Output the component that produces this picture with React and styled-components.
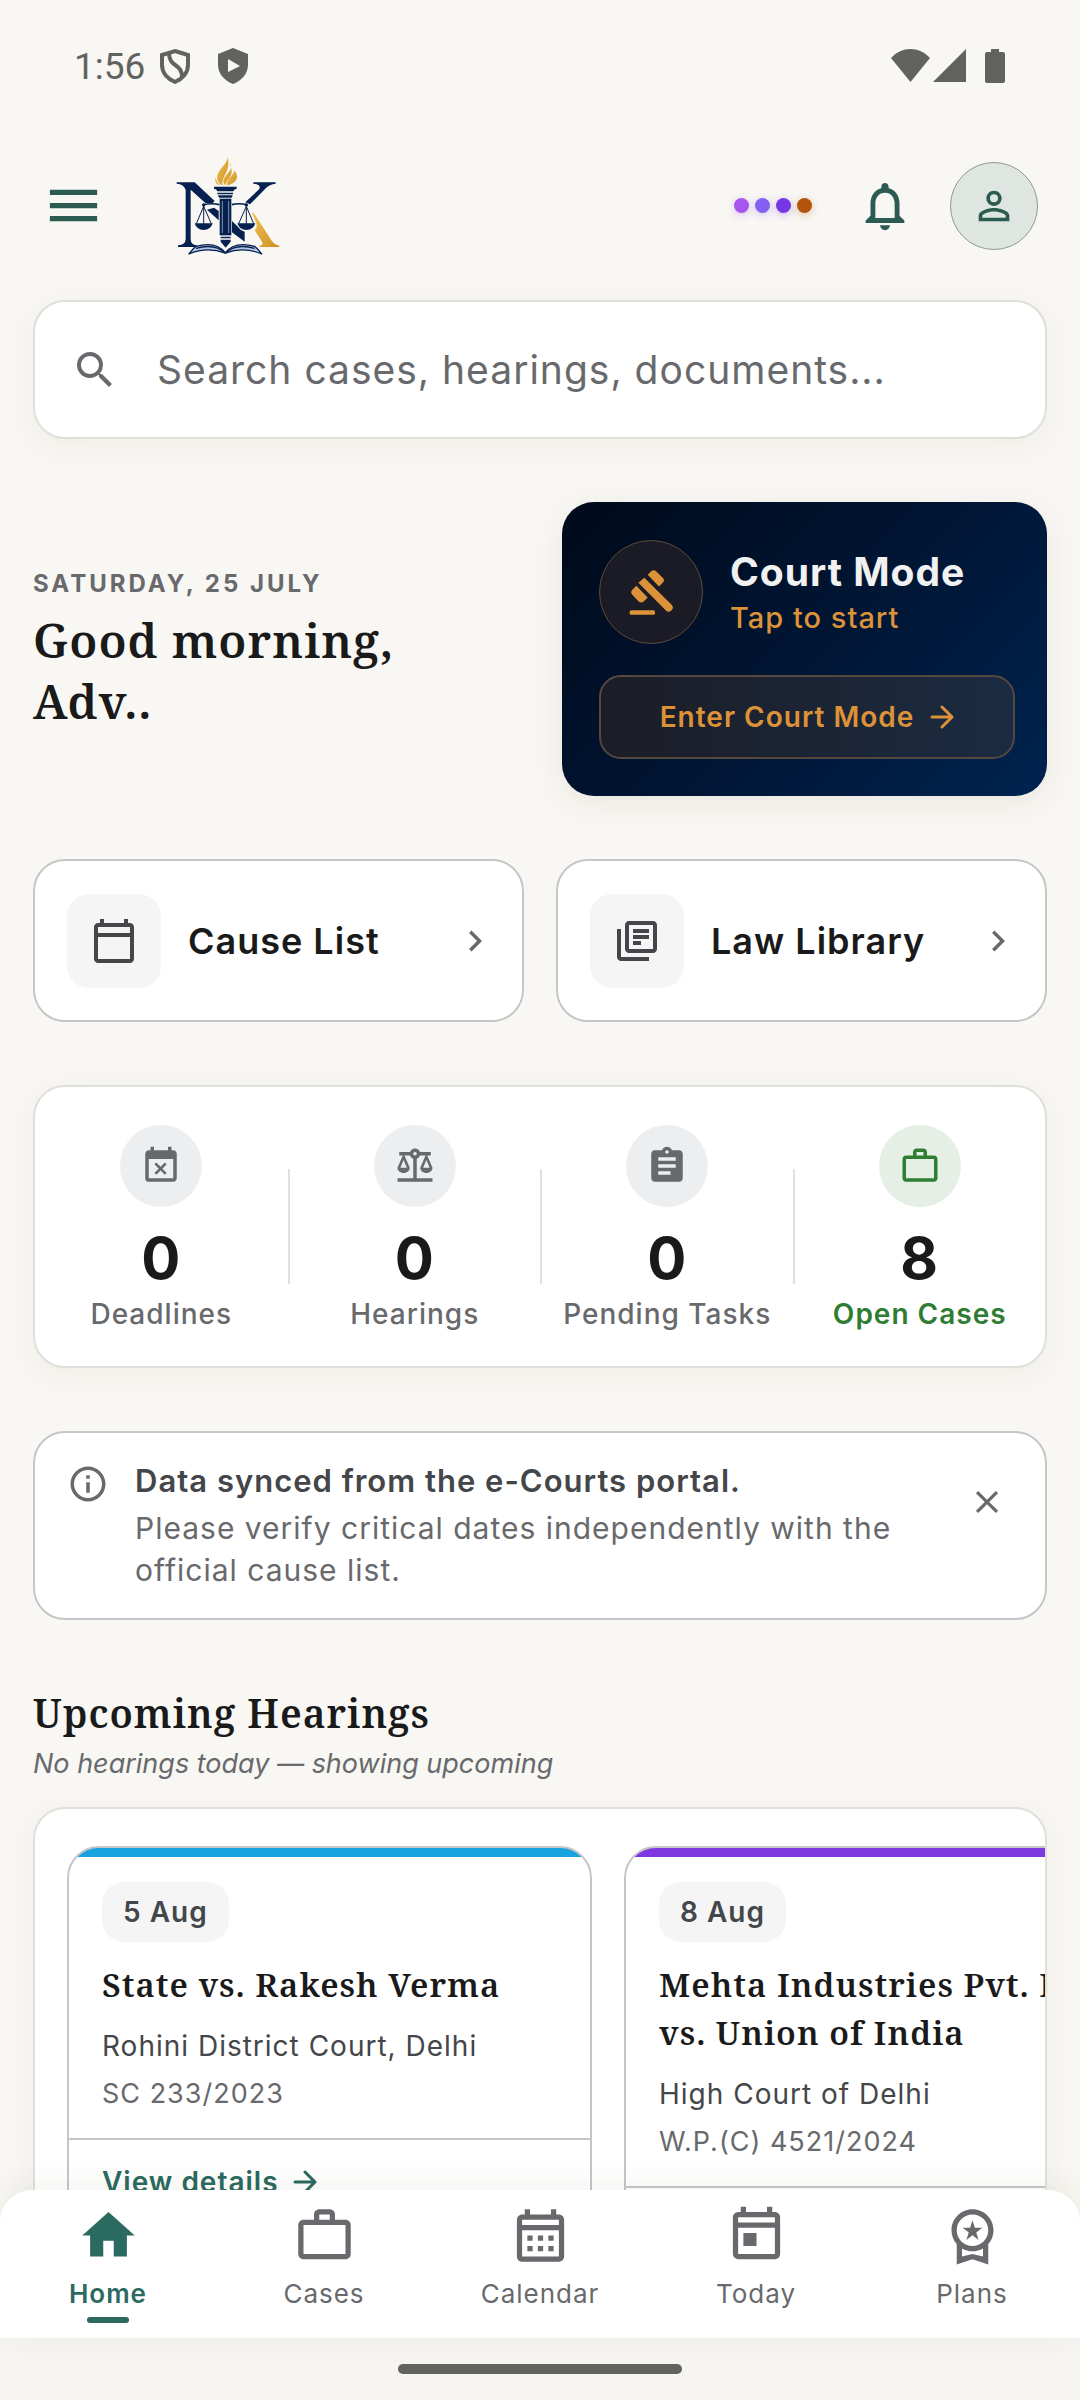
import styled, { createGlobalStyle } from "styled-components";
import {
  MdMenu,
  MdNotificationsNone,
  MdPersonOutline,
  MdSearch,
  MdOutlineCalendarToday,
  MdOutlineLibraryBooks,
  MdChevronRight,
  MdEventBusy,
  MdBalance,
  MdAssignment,
  MdWorkOutline,
  MdInfoOutline,
  MdClose,
  MdHome,
  MdOutlineCalendarMonth,
  MdOutlineToday,
  MdOutlineWorkspacePremium,
} from "react-icons/md";

const teal = "#2b6a60";
const darkTeal = "#2b5b51";
const ink = "#1a1a1a";
const grey = "#68696c";
const darkGrey = "#444649";
const amber = "#dc9238";
const green = "#2e7d32";
const paper = "#f8f7f3";
const line = "#c6c6c8";
const softLine = "#e0dfda";
const system = "#62625f";
const serif = `"Noto Serif", "DejaVu Serif Condensed", "DejaVu Serif", serif`;

const stats = [
  { label: "Deadlines", value: 0, Icon: MdEventBusy },
  { label: "Hearings", value: 0, Icon: MdBalance },
  { label: "Pending Tasks", value: 0, Icon: MdAssignment },
  { label: "Open Cases", value: 8, Icon: MdWorkOutline, active: true },
];

const hearings = [
  {
    date: "5 Aug",
    title: "State vs. Rakesh Verma",
    court: "Rohini District Court, Delhi",
    number: "SC 233/2023",
    color: "#17a2e0",
  },
  {
    date: "8 Aug",
    title: "Mehta Industries Pvt. Ltd. vs. Union of India",
    court: "High Court of Delhi",
    number: "W.P.(C) 4521/2024",
    color: "#7c3ae0",
  },
];

const tabs = [
  { label: "Home", Icon: MdHome, active: true },
  { label: "Cases", Icon: MdWorkOutline },
  { label: "Calendar", Icon: MdOutlineCalendarMonth },
  { label: "Today", Icon: MdOutlineToday },
  { label: "Plans", Icon: MdOutlineWorkspacePremium },
];

const dots = ["#a855f0", "#8560f0", "#7638e6", "#b4530c"];

const Logo = () => (
  <svg width="104" height="98" viewBox="48 50 312 294" role="img" aria-label="NK">
    <defs>
      <linearGradient id="gold" x1="0" y1="0" x2="1" y2="1">
        <stop offset="0" stopColor="#efc654" />
        <stop offset="1" stopColor="#cf8e22" />
      </linearGradient>
    </defs>
    <g fill="#06214f">
      <path d="M50 126H104L164 182 158 188H136L92 148V296Q92 313 110 315V320H54V315Q77 313 77 296V150Q72 131 50 130Z" />
      <path d="M141 208L162 202 176 212V240Z" />
      <path d="M216 242L232 258Q240 270 254 274V304L216 276Z" />
      <path d="M280 126H347V130Q328 132 318 143L270 192 256 186 298 146Q304 133 280 130Z" />
    </g>
    <path d="M274 214L284 222 334 300Q343 314 358 316V320H298V316Q312 314 306 304L284 270Q294 262 288 246Z" fill="url(#gold)" />
    <g fill="url(#gold)">
      <path d="M203 50C200 78 168 88 172 116 174 126 179 132 188 135 180 110 214 96 203 50Z" />
      <path d="M210 66C224 90 196 100 190 120 189 127 191 132 196 135 200 116 220 108 214 84Z" />
      <path d="M223 90C222 106 200 114 201 135 222 132 238 116 228 98Z" />
      <path d="M167 110C163 122 168 132 180 135 172 128 169 121 167 110Z" />
    </g>
    <g stroke="#06214f" fill="none">
      <path d="M128 194Q154 187 178 193M216 193Q238 187 262 194" strokeWidth="5" />
      <path d="M131 190V252M131 198L109 250M131 198L154 250M259 190V252M259 198L236 250M259 198L281 250" strokeWidth="3" />
    </g>
    <g fill="#06214f">
      <circle cx="131" cy="194" r="5" />
      <circle cx="259" cy="194" r="5" />
      <path d="M104 249H158Q152 269 131 269T104 249Z" />
      <path d="M232 249H286Q280 269 259 269T232 249Z" />
      <path d="M162 139H230V145Q222 146 220 153H172Q170 146 162 145Z" />
      <path d="M172 157H219V162H172ZM174 165H218L215 172H177Z" />
      <path d="M179 175H214V285H179Z" />
      <path d="M182 289H212V294H182ZM182 298H212V304L197 322 182 304Z" />
    </g>
    <path d="M187 182V278M206 182V278" stroke="#c3cee2" strokeWidth="2" />
    <path d="M196 338Q170 302 108 318 98 326 87 341 140 318 196 338 252 318 305 341 294 326 284 318 222 302 196 338Z" fill="#b6c6e2" stroke="#06214f" strokeWidth="4" strokeLinejoin="round" />
    <path d="M196 338Q164 308 108 324M196 338Q228 308 284 324" fill="none" stroke="#06214f" strokeWidth="4" />
  </svg>
);

const OutlineShield = () => (
  <svg width="30" height="36" viewBox="0 0 30 36" fill="none" stroke={system} strokeWidth="4">
    <path d="M15 3L28 7V17C28 25 22 31 15 34 8 31 2 25 2 17V7Z" />
    <path d="M9 5C9 20 23 15 22 30" />
  </svg>
);

const PlayShield = () => (
  <svg width="30" height="36" viewBox="0 0 30 36">
    <path d="M15 0L30 6V17C30 26 23 33 15 36 7 33 0 26 0 17V6Z" fill={system} />
    <path d="M10 11L22 18 10 24Z" fill={paper} />
  </svg>
);

const Signals = () => (
  <svg width="115" height="35" viewBox="0 0 115 35" fill={system}>
    <path d="M0 9C11-3 28-3 39 9L19.500 33Z" />
    <path d="M75 0V33H42Z" />
    <path d="M100 0H108V3H112Q114 3 114 5V32Q114 34 112 34H96Q94 34 94 32V5Q94 3 96 3H100Z" />
  </svg>
);

const Gavel = () => (
  <svg width="44" height="47" viewBox="112 116 132 140" fill={amber}>
    <path d="M168 133L178 123Q186 115 194 123L213 142Q221 150 213 157L202 168Z" />
    <path d="M134 166L168 201 157 212Q149 220 141 213L122 193Q115 186 122 178Z" />
    <path d="M140 157L158 142 240 223A12 12 0 0 1 222 239Z" />
    <rect x="114" y="239" width="76" height="14" rx="5" />
  </svg>
);

const Arrow = () => (
  <svg width="24" height="24" viewBox="0 0 24 24" fill="none" stroke="currentColor" strokeWidth="3" strokeLinecap="round" strokeLinejoin="round">
    <path d="M2 12H22M12 2L22 12 12 22" />
  </svg>
);

const App = () => {
  return (
    <>
      <GlobalStyle />
      <Screen>
        <StatusBar>
          <Clock>1:56</Clock>
          <OutlineShield />
          <PlayShield />
          <Spacer />
          <Signals />
        </StatusBar>
        <Header>
          <IconButton aria-label="Menu">
            <MdMenu size={63} />
          </IconButton>
          <Logo />
          <Spacer />
          <Dots>
            {dots.map((color) => (
              <Dot key={color} $color={color} />
            ))}
          </Dots>
          <IconButton aria-label="Notifications">
            <MdNotificationsNone size={58} />
          </IconButton>
          <Avatar aria-label="Profile">
            <MdPersonOutline size={46} />
          </Avatar>
        </Header>

        <Main>
          <SearchBox>
            <MdSearch size={48} />
            <SearchInput type="text" aria-label="Search" placeholder="Search cases, hearings, documents..." />
          </SearchBox>

          <Hero>
            <Greeting>
              <Today>SATURDAY, 25 JULY</Today>
              <Hello>Good morning, Adv..</Hello>
            </Greeting>
            <CourtCard>
              <CourtTop>
                <GavelCircle>
                  <Gavel />
                </GavelCircle>
                <div>
                  <CourtTitle>Court Mode</CourtTitle>
                  <CourtHint>Tap to start</CourtHint>
                </div>
              </CourtTop>
              <CourtButton>
                Enter Court Mode
                <Arrow />
              </CourtButton>
            </CourtCard>
          </Hero>

          <QuickLinks>
            <QuickLink href="#cause-list">
              <Tile>
                <MdOutlineCalendarToday size={48} />
              </Tile>
              <QuickLabel>Cause List</QuickLabel>
              <MdChevronRight size={42} />
            </QuickLink>
            <QuickLink href="#law-library">
              <Tile>
                <MdOutlineLibraryBooks size={48} />
              </Tile>
              <QuickLabel>Law Library</QuickLabel>
              <MdChevronRight size={42} />
            </QuickLink>
          </QuickLinks>

          <Stats>
            {stats.map(({ label, value, Icon, active }) => (
              <Stat key={label}>
                <StatIcon $active={active}>
                  <Icon size={42} />
                </StatIcon>
                <StatValue>{value}</StatValue>
                <StatLabel $active={active}>{label}</StatLabel>
              </Stat>
            ))}
          </Stats>

          <Notice>
            <NoticeIcon>
              <MdInfoOutline size={42} />
            </NoticeIcon>
            <NoticeBody>
              <NoticeTitle>Data synced from the e-Courts portal.</NoticeTitle>
              <NoticeText>Please verify critical dates independently with the official cause list.</NoticeText>
            </NoticeBody>
            <CloseButton aria-label="Dismiss">
              <MdClose size={38} />
            </CloseButton>
          </Notice>

          <section>
            <SectionTitle>Upcoming Hearings</SectionTitle>
            <SectionHint>No hearings today — showing upcoming</SectionHint>
            <HearingList>
              {hearings.map((hearing) => (
                <HearingCard key={hearing.number} $color={hearing.color}>
                  <HearingBody>
                    <DateChip>{hearing.date}</DateChip>
                    <CaseTitle>{hearing.title}</CaseTitle>
                    <Court>{hearing.court}</Court>
                    <CaseNumber>{hearing.number}</CaseNumber>
                  </HearingBody>
                  <DetailsLink href="#details">
                    View details
                    <Arrow />
                  </DetailsLink>
                </HearingCard>
              ))}
            </HearingList>
          </section>
        </Main>

        <BottomNav>
          {tabs.map(({ label, Icon, active }) => (
            <Tab key={label} href={"#" + label.toLowerCase()} $active={active}>
              <Icon size={63} />
              {label}
              {active && <TabMark />}
            </Tab>
          ))}
        </BottomNav>
        <GestureArea>
          <GesturePill />
        </GestureArea>
      </Screen>
    </>
  );
};

export default App;

const GlobalStyle = createGlobalStyle`
  * {
    box-sizing: border-box;
  }
  body {
    margin: 0;
    background: ${paper};
    font-family: Inter, "Liberation Sans", sans-serif;
    letter-spacing: 1px;
    color: ${ink};
  }
  h1, h2, h3, p {
    margin: 0;
  }
  button, input {
    font: inherit;
    letter-spacing: inherit;
    border: 0;
    padding: 0;
    background: none;
  }
  a {
    color: inherit;
    text-decoration: none;
  }
  svg {
    display: block;
    flex-shrink: 0;
  }
`;

const Screen = styled.div`
  display: flex;
  flex-direction: column;
  height: 100vh;
  overflow: hidden;
`;

const Spacer = styled.div`
  flex: 1;
`;

const StatusBar = styled.div`
  display: flex;
  align-items: center;
  flex-shrink: 0;
  height: 132px;
  padding: 0 74px;
  color: ${system};
  svg + svg {
    margin-left: 28px;
  }
`;

const Clock = styled.span`
  margin-right: 15px;
  font-family: Roboto, sans-serif;
  font-size: 37px;
  letter-spacing: 0;
`;

const Header = styled.header`
  display: flex;
  align-items: center;
  flex-shrink: 0;
  height: 147px;
  padding: 0 42px;
  > svg {
    margin-left: 71px;
  }
`;

const IconButton = styled.button`
  color: ${darkTeal};
`;

const Dots = styled.div`
  display: flex;
  gap: 6px;
  margin-right: 44px;
`;

const Dot = styled.span`
  width: 15px;
  height: 15px;
  border-radius: 50%;
  background: ${(props) => props.$color};
  box-shadow: 0 2px 8px ${(props) => props.$color}55;
`;

const Avatar = styled.button`
  display: grid;
  place-items: center;
  width: 88px;
  height: 88px;
  margin-left: 36px;
  border: 1px solid #8c9a94;
  border-radius: 50%;
  background: #dfe5e1;
  color: ${darkTeal};
`;

const Main = styled.main`
  display: flex;
  flex-direction: column;
  flex: 1;
  gap: 63px;
  min-height: 0;
  overflow: hidden;
  padding: 21px 33px 0;
  > * {
    flex-shrink: 0;
  }
`;

const Card = styled.div`
  border: 2px solid ${(props) => (props.$strong ? line : softLine)};
  border-radius: 32px;
  background: #fff;
  box-shadow: ${(props) => (props.$strong ? "none" : "0 8px 32px rgba(60, 50, 20, 0.05)")};
`;

const SearchBox = styled(Card)`
  display: flex;
  align-items: center;
  gap: 38px;
  height: 139px;
  padding: 0 36px;
  color: ${grey};
`;

const SearchInput = styled.input`
  flex: 1;
  min-width: 0;
  outline: none;
  font-size: 39px;
  &::placeholder {
    color: ${grey};
    opacity: 1;
  }
`;

const Hero = styled.div`
  display: grid;
  grid-template-columns: 1fr 485px;
  gap: 27px;
  align-items: center;
`;

const Greeting = styled.div`
  max-width: 400px;
`;

const Today = styled.p`
  margin-bottom: 8px;
  font-size: 24px;
  font-weight: 700;
  line-height: 36px;
  letter-spacing: 3px;
  color: ${grey};
`;

const Hello = styled.h1`
  font-family: ${serif};
  font-size: 47px;
  font-weight: 600;
  line-height: 61px;
`;

const CourtCard = styled.div`
  padding: 38px 32px 37px 37px;
  border-radius: 32px;
  background: linear-gradient(135deg, #000a1a, #001533 50%, #002350);
  box-shadow: 0 8px 32px rgba(60, 50, 20, 0.08);
`;

const CourtTop = styled.div`
  display: flex;
  align-items: center;
  gap: 27px;
  margin-bottom: 31px;
`;

const GavelCircle = styled.div`
  display: grid;
  place-items: center;
  width: 104px;
  height: 104px;
  border: 1px solid #5c4a3a;
  border-radius: 50%;
  background: #1a1b24;
`;

const CourtTitle = styled.h2`
  margin-bottom: 4px;
  font-size: 39px;
  font-weight: 700;
  line-height: 48px;
  color: #f1f1f1;
`;

const CourtHint = styled.p`
  font-size: 29px;
  font-weight: 500;
  line-height: 36px;
  color: ${amber};
`;

const CourtButton = styled.button`
  display: flex;
  align-items: center;
  justify-content: center;
  gap: 16px;
  width: 100%;
  height: 84px;
  border: 2px solid #54483f;
  border-radius: 22px;
  background: linear-gradient(90deg, #1c1d26, #1b2b42);
  font-size: 28px;
  font-weight: 600;
  color: ${amber};
`;

const QuickLinks = styled.div`
  display: grid;
  grid-template-columns: 1fr 1fr;
  gap: 32px;
`;

const QuickLink = styled(Card).attrs({ as: "a", $strong: true })`
  display: flex;
  align-items: center;
  gap: 27px;
  padding: 33px 26px 32px 32px;
  color: ${grey};
`;

const Tile = styled.div`
  display: grid;
  place-items: center;
  width: 94px;
  height: 94px;
  border-radius: 22px;
  background: #f5f5f6;
  color: ${darkGrey};
`;

const QuickLabel = styled.span`
  flex: 1;
  font-size: 36px;
  font-weight: 600;
  color: ${ink};
`;

const Stats = styled(Card)`
  display: grid;
  grid-template-columns: repeat(4, 1fr);
  padding: 38px 0 34px;
`;

const Stat = styled.div`
  display: flex;
  flex-direction: column;
  align-items: center;
  & + & {
    padding-left: 2px;
    background: linear-gradient(#e3e0da, #e3e0da) left 44px / 2px 115px no-repeat;
  }
`;

const StatIcon = styled.div`
  display: grid;
  place-items: center;
  width: 82px;
  height: 82px;
  margin-bottom: 16px;
  border-radius: 50%;
  background: ${(props) => (props.$active ? "#e6efe6" : "#edeef0")};
  color: ${(props) => (props.$active ? green : grey)};
`;

const StatValue = styled.span`
  margin-bottom: 3px;
  font-size: 58px;
  font-weight: 700;
  line-height: 70px;
`;

const StatLabel = styled.span`
  font-size: 28px;
  font-weight: ${(props) => (props.$active ? 600 : 500)};
  line-height: 36px;
  color: ${(props) => (props.$active ? green : grey)};
`;

const Notice = styled(Card).attrs({ $strong: true })`
  display: flex;
  padding: 27px 16px 27px 32px;
  color: ${grey};
`;

const NoticeIcon = styled.div`
  padding: 3px 26px 0 0;
`;

const NoticeBody = styled.div`
  flex: 1;
`;

const NoticeTitle = styled.p`
  margin-bottom: 5px;
  font-size: 31px;
  font-weight: 600;
  line-height: 42px;
  color: ${darkGrey};
`;

const NoticeText = styled.p`
  font-size: 30px;
  line-height: 42px;
`;

const CloseButton = styled.button`
  display: grid;
  place-items: center;
  width: 84px;
  height: 84px;
  color: ${grey};
`;

const SectionTitle = styled.h2`
  margin-bottom: 3px;
  font-family: ${serif};
  font-size: 39px;
  font-weight: 600;
  line-height: 60px;
`;

const SectionHint = styled.p`
  margin-bottom: 25px;
  font-size: 27px;
  font-style: italic;
  line-height: 36px;
  letter-spacing: normal;
  color: ${grey};
`;

const HearingList = styled(Card)`
  display: flex;
  align-items: flex-start;
  gap: 32px;
  overflow: hidden;
  padding: 37px 32px;
`;

const HearingCard = styled.article`
  flex: 0 0 525px;
  overflow: hidden;
  border: 2px solid ${line};
  border-radius: 32px;
  background: linear-gradient(${(props) => props.$color}, ${(props) => props.$color}) top / 100% 9px no-repeat;
`;

const HearingBody = styled.div`
  padding: 34px 32px 24px 33px;
`;

const DateChip = styled.span`
  display: inline-block;
  margin-bottom: 19px;
  padding: 0 21px;
  border-radius: 22px;
  background: #f5f5f6;
  font-size: 28px;
  font-weight: 600;
  line-height: 60px;
  color: ${darkGrey};
`;

const CaseTitle = styled.h3`
  margin-bottom: 15px;
  font-family: ${serif};
  font-size: 33px;
  font-weight: 600;
  line-height: 48px;
`;

const Court = styled.p`
  margin-bottom: 6px;
  font-size: 28px;
  line-height: 44px;
  color: ${darkGrey};
`;

const CaseNumber = styled.p`
  font-size: 27px;
  line-height: 40px;
  color: ${grey};
`;

const DetailsLink = styled.a`
  display: flex;
  align-items: center;
  gap: 14px;
  padding: 24px 33px;
  border-top: 2px solid ${line};
  font-size: 28px;
  font-weight: 600;
  line-height: 36px;
  color: ${teal};
`;

const BottomNav = styled.nav`
  position: relative;
  display: grid;
  grid-template-columns: repeat(5, 1fr);
  flex-shrink: 0;
  height: 148px;
  margin-top: -32px;
  padding-top: 14px;
  border-radius: 32px 32px 0 0;
  background: #fff;
  box-shadow: 0 -4px 32px rgba(60, 50, 20, 0.07);
`;

const Tab = styled.a`
  display: flex;
  flex-direction: column;
  align-items: center;
  font-size: 26px;
  font-weight: ${(props) => (props.$active ? 600 : 400)};
  line-height: 36px;
  color: ${(props) => (props.$active ? teal : grey)};
  svg {
    margin-bottom: 9px;
  }
`;

const TabMark = styled.span`
  width: 42px;
  height: 6px;
  margin-top: 5px;
  border-radius: 3px;
  background: ${teal};
`;

const GestureArea = styled.div`
  display: grid;
  place-items: center;
  flex-shrink: 0;
  height: 62px;
  background: #f6f5f1;
`;

const GesturePill = styled.div`
  width: 284px;
  height: 10px;
  border-radius: 5px;
  background: ${system};
`;
